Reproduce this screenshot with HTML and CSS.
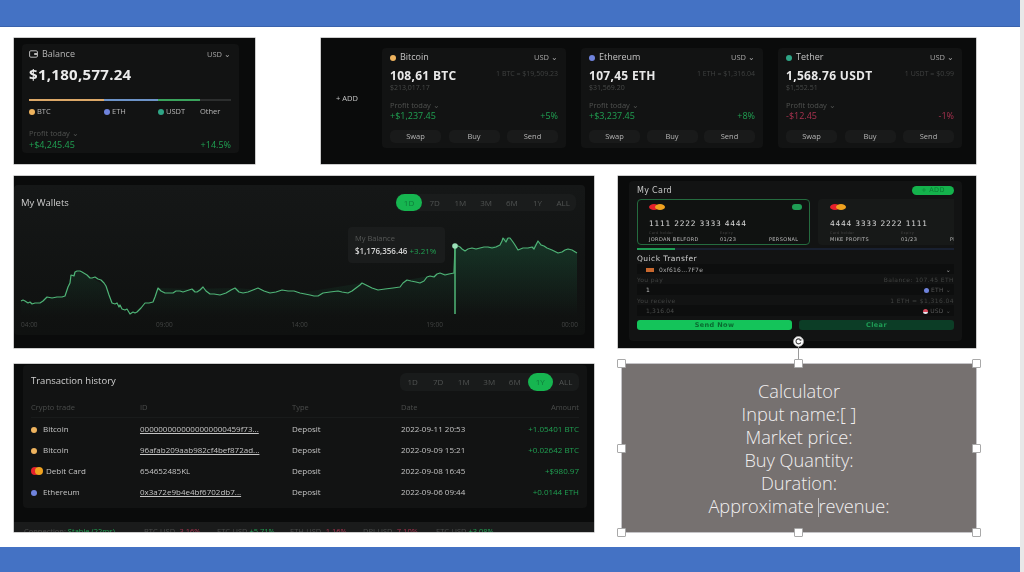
FILE: index.html
```html
<!DOCTYPE html>
<html lang="en">
<head>
  <meta charset="UTF-8" />
  <title>Crypto dashboard slide</title>
  <link rel="stylesheet" href="styles.css">
</head>
<body>
<div class="slide">
  <div class="band band-top"></div>
  <div class="band band-bottom"></div>

  <!-- Balance -->
  <section class="shot shot-balance">
    <div class="inner balance">
      <div class="row-between head">
        <span class="title-icon">
          <svg width="9" height="8" viewBox="0 0 9 8"><rect x="0.6" y="0.8" width="7.8" height="6.4" rx="1.2" fill="none" stroke="#bbb" stroke-width="1"/><rect x="5.2" y="3" width="3.2" height="2" fill="#bbb"/></svg>
          Balance
        </span>
        <span class="muted-usd">USD ⌄</span>
      </div>
      <div class="balance-value">$1,180,577.24</div>
      <div class="split-bar">
        <i class="seg-btc"></i><i class="seg-eth"></i><i class="seg-usdt"></i><i class="seg-other"></i>
      </div>
      <div class="legend">
        <span class="leg-btc"><i class="dot dot-btc"></i>BTC</span>
        <span class="leg-eth"><i class="dot dot-eth"></i>ETH</span>
        <span class="leg-usdt"><i class="dot dot-usdt"></i>USDT</span>
        <span>Other</span>
      </div>
      <div class="profit-label balance-profit">Profit today ⌄</div>
      <div class="row-between profit-value up"><span>+$4,245.45</span><span>+14.5%</span></div>
    </div>
  </section>

  <!-- Coin cards -->
  <section class="shot shot-assets">
    <div class="add-link">+ ADD</div>
    <div class="asset-list">
      <div class="inner asset asset-wide">
        <div class="row-between head"><span class="coin"><i class="dot dot-btc"></i>Bitcoin</span><span class="muted-usd">USD ⌄</span></div>
        <div class="row-between asset-main"><strong>108,61 BTC</strong><span class="rate">1 BTC = $19,509.23</span></div>
        <div class="asset-sub">$213,017.17</div>
        <div class="profit-label">Profit today ⌄</div>
        <div class="row-between profit-value up"><span>+$1,237.45</span><span>+5%</span></div>
        <div class="actions"><span>Swap</span><span>Buy</span><span>Send</span></div>
      </div>
      <div class="inner asset">
        <div class="row-between head"><span class="coin"><i class="dot dot-eth"></i>Ethereum</span><span class="muted-usd">USD ⌄</span></div>
        <div class="row-between asset-main"><strong>107,45 ETH</strong><span class="rate">1 ETH = $1,316.04</span></div>
        <div class="asset-sub">$31,569.20</div>
        <div class="profit-label">Profit today ⌄</div>
        <div class="row-between profit-value up"><span>+$3,237.45</span><span>+8%</span></div>
        <div class="actions"><span>Swap</span><span>Buy</span><span>Send</span></div>
      </div>
      <div class="inner asset asset-wide">
        <div class="row-between head"><span class="coin"><i class="dot dot-usdt"></i>Tether</span><span class="muted-usd">USD ⌄</span></div>
        <div class="row-between asset-main"><strong>1,568.76 USDT</strong><span class="rate">1 USDT = $0.99</span></div>
        <div class="asset-sub">$1,552.51</div>
        <div class="profit-label">Profit today ⌄</div>
        <div class="row-between profit-value down"><span>-$12.45</span><span>-1%</span></div>
        <div class="actions"><span>Swap</span><span>Buy</span><span>Send</span></div>
      </div>
    </div>
  </section>

  <!-- Wallet chart -->
  <section class="shot shot-wallets">
    <div class="inner wallets">
      <div class="row-between wallets-head">
        <span class="wallets-title">My Wallets</span>
        <div class="tabs">
          <span class="on">1D</span><span>7D</span><span>1M</span><span>3M</span><span>6M</span><span>1Y</span><span>ALL</span>
        </div>
      </div>
      <svg class="chart" width="580" height="92" viewBox="14 224 580 92">
        <defs>
          <linearGradient id="fillRight" x1="0" y1="0" x2="0" y2="1">
            <stop offset="0" stop-color="#1c6b45" stop-opacity="0.38"/>
            <stop offset="1" stop-color="#1c6b45" stop-opacity="0"/>
          </linearGradient>
          <linearGradient id="fillLeft" x1="0" y1="0" x2="0" y2="1">
            <stop offset="0" stop-color="#1c6b45" stop-opacity="0.2"/>
            <stop offset="1" stop-color="#1c6b45" stop-opacity="0"/>
          </linearGradient>
        </defs>
        <polygon fill="url(#fillLeft)" points="21,301 35,303 47,297 65,296 71,275 77,271 92,278 106,286 112,303 130,314 145,303 153,302 158,288 192,289 235,288 300,293 362,283 378,290 400,287 407,280 430,276 440,273 454,273 454,316 21,316"/>
        <polygon fill="url(#fillRight)" points="455,246 465,251 480,248 500,245 503,238 510,238 518,250 532,247 538,241 547,248 558,253 568,249 577,253 577,316 455,316"/>
        <polyline fill="none" stroke="#4fb477" stroke-width="1.2" stroke-linejoin="round" points="21,301 23,300 25,301 28,303 30,302 32,304 35,303 38,303 40,303 43,301 47,297 52,298 57,297 62,297 65,296 68,287 70,283 71,275 74,276 75,272 77,271 80,271 82,272 87,275 90,278 92,278 95,277 98,279 101,280 104,283 106,286 109,295 112,303 115,304 117,303 119,307 120,305 122,309 125,310 127,309 130,314 133,312 135,313 137,312 141,308 145,303 149,303 153,302 155,297 158,288 161,291 165,293 169,293 173,293 176,291 180,291 183,292 186,291 189,290 192,289 195,292 197,292 200,290 203,287 206,291 210,294 214,294 220,295 226,293 231,290 235,288 239,292 243,293 248,292 253,290 258,288 264,291 270,293 276,292 282,290 288,291 294,291 297,292 300,293 305,294 310,295 314,296 318,296 323,293 330,292 338,291 342,292 348,293 352,291 356,288 360,285 362,283 366,285 372,288 378,290 385,289 393,288 400,287 403,283 407,280 411,281 416,282 420,283 424,281 427,277 430,276 434,277 437,274 440,273 445,275 449,274 454,273 455,246 458,246 460,247 462,249 465,251 468,249 472,248 476,249 480,248 484,247 488,247 492,248 496,247 500,245 502,241 503,238 506,242 508,238 510,238 513,242 515,245 518,250 523,248 528,248 532,247 534,249 536,245 538,241 541,245 544,246 547,248 552,250 558,253 562,252 565,250 568,249 572,250 577,253"/>
        <line x1="455" y1="246" x2="455" y2="314" stroke="#4cae72" stroke-width="1.6"/>
        <circle cx="455" cy="246" r="2.8" fill="#9be0b8"/>
      </svg>
      <div class="axis"><span>04:00</span><span>09:00</span><span>14:00</span><span>19:00</span><span>00:00</span></div>
    </div>
    <div class="chart-tip">
      <div class="tip-label">My Balance</div>
      <div class="tip-value">$1,176,356.46 <span class="up">+3.21%</span></div>
    </div>
  </section>

  <!-- Cards + quick transfer -->
  <section class="shot shot-cards">
    <div class="inner cards">
      <div class="row-between cards-head"><span>My Card</span><span class="add-pill">+ ADD</span></div>
      <div class="card-row">
        <div class="bank-card bank-card-on">
          <div class="row-between"><span class="mc"><i></i><i></i></span><span class="card-badge"></span></div>
          <div class="card-number">1111 2222 3333 4444</div>
          <div class="card-meta">
            <div class="meta-name"><small>Card holder</small>JORDAN BELFORD</div>
            <div class="meta-exp"><small>Expiry</small>01/23</div>
            <div class="meta-kind">PERSONAL</div>
          </div>
        </div>
        <div class="bank-card">
          <div class="row-between"><span class="mc"><i></i><i></i></span></div>
          <div class="card-number">4444 3333 2222 1111</div>
          <div class="card-meta">
            <div class="meta-name"><small>Card holder</small>MIKE PROFITS</div>
            <div class="meta-exp"><small>Expiry</small>01/23</div>
            <div class="meta-kind">PERSONAL</div>
          </div>
        </div>
      </div>
      <div class="card-progress"><i></i></div>
      <div class="quick-title">Quick Transfer</div>
      <div class="field field-address"><span><i class="addr-icon"></i>0xf616...7F7e</span><span>⌄</span></div>
      <div class="row-between field-label"><span>You pay</span><span>Balance: 107.45 ETH</span></div>
      <div class="field field-tall"><span class="field-num">1</span><span><i class="dot dot-eth"></i>ETH ⌄</span></div>
      <div class="row-between field-label"><span>You receive</span><span>1 ETH = $1,316.04</span></div>
      <div class="field field-tall"><span class="field-dim">1,316.04</span><span><i class="dot dot-flag"></i>USD ⌄</span></div>
      <div class="form-buttons"><span class="btn-send">Send Now</span><span class="btn-clear">Clear</span></div>
    </div>
  </section>

  <!-- Transactions -->
  <section class="shot shot-history">
    <div class="inner history">
      <div class="row-between history-head">
        <span class="history-title">Transaction history</span>
        <div class="tabs">
          <span>1D</span><span>7D</span><span>1M</span><span>3M</span><span>6M</span><span class="on">1Y</span><span>ALL</span>
        </div>
      </div>
      <table class="tx">
        <thead>
          <tr><th>Crypto trade</th><th>ID</th><th>Type</th><th>Date</th><th>Amount</th></tr>
        </thead>
        <tbody>
          <tr><td><i class="dot dot-btc"></i>Bitcoin</td><td><u>0000000000000000000459f73...</u></td><td>Deposit</td><td>2022-09-11 20:53</td><td class="up">+1.05401 BTC</td></tr>
          <tr><td><i class="dot dot-btc"></i>Bitcoin</td><td><u>96afab209aab982cf4bef872ad...</u></td><td>Deposit</td><td>2022-09-09 15:21</td><td class="up">+0.02642 BTC</td></tr>
          <tr><td><span class="mc mc-small"><i></i><i></i></span>Debit Card</td><td>654652485KL</td><td>Deposit</td><td>2022-09-08 16:45</td><td class="up">+$980.97</td></tr>
          <tr><td><i class="dot dot-eth"></i>Ethereum</td><td><u>0x3a72e9b4e4bf6702db7...</u></td><td>Deposit</td><td>2022-09-06 09:44</td><td class="up">+0.0144 ETH</td></tr>
        </tbody>
      </table>
    </div>
    <div class="ticker">
      <span class="tick-conn">Connection: <b class="up">Stable (22ms)</b></span>
      <span class="tick">BTC-USD <b class="down">-3.16%</b></span>
      <span class="tick">ETC-USD <b class="up">+5.71%</b></span>
      <span class="tick">ETH-USD <b class="down">-1.16%</b></span>
      <span class="tick">DPI-USD <b class="down">-7.10%</b></span>
      <span class="tick">ETC-USD <b class="up">+3.08%</b></span>
    </div>
  </section>

  <!-- Selected text box on the slide -->
  <div class="textbox">
    <p>Calculator</p>
    <p>Input name:[ ]</p>
    <p>Market price:</p>
    <p>Buy Quantity:</p>
    <p>Duration:</p>
    <p>Approximate <span class="caret"></span>revenue:</p>
    <i class="handle h-tl"></i><i class="handle h-tc"></i><i class="handle h-tr"></i>
    <i class="handle h-ml"></i><i class="handle h-mr"></i>
    <i class="handle h-bl"></i><i class="handle h-bc"></i><i class="handle h-br"></i>
    <i class="rotate-stem"></i>
    <span class="rotate-knob">
      <svg width="11" height="11" viewBox="0 0 11 11"><circle cx="5.5" cy="5.5" r="5" fill="#fff" stroke="#aaa" stroke-width="0.8"/><path d="M7.8 6.4A2.5 2.5 0 1 1 7.4 3.7" fill="none" stroke="#444" stroke-width="1.1"/><path d="M8.4 2.4V4.7H6.2z" fill="#444"/></svg>
    </span>
  </div>
</div>
</body>
</html>
```

FILE: styles.css
```css
html, body {
  margin: 0;
  padding: 0;
  background: #e8e8e8;
}

.slide {
  position: relative;
  width: 1020px;
  height: 572px;
  overflow: hidden;
  background: #fff;
  font-family: "Open Sans", Arial, sans-serif;
}

.band {
  position: absolute;
  left: 0;
  right: 0;
  background: #4472c4;
}
.band-top { top: 0; height: 26px; border-bottom: 1px solid #3a63ad; }
.band-bottom { top: 547px; height: 25px; }

/* pasted screenshots, placed freely on the slide */
.shot {
  position: absolute;
  background: #0a0b0b;
  color: #cfcfcf;
  overflow: hidden;
  font-size: 8px;
  box-shadow: 0 0 0 0.5px #999;
}
.shot > * { filter: blur(0.45px); }
.shot-balance { left: 14px; top: 38px; width: 241px; height: 126px; }
.shot-assets { left: 321px; top: 38px; width: 655px; height: 126px; display: flex; }
.shot-wallets { left: 14px; top: 176px; width: 580px; height: 172px; }
.shot-cards { left: 618px; top: 176px; width: 358px; height: 172px; }
.shot-history { left: 14px; top: 364px; width: 580px; height: 168px; }

.inner {
  background: #121313;
  border-radius: 4px;
  box-sizing: border-box;
}

.row-between {
  display: flex;
  justify-content: space-between;
  align-items: center;
}

.up { color: #20a052; }
.down { color: #a8324f; }

.dot {
  display: inline-block;
  width: 6px;
  height: 6px;
  border-radius: 50%;
  margin-right: 4px;
  vertical-align: -0.5px;
}
.dot-btc { background: #eeb35e; }
.dot-eth { background: #6f83dc; }
.dot-usdt { background: #2fa586; }
.dot-flag { background: linear-gradient(#d9485a 50%, #e8e8f0 50%); }

.head { height: 10px; line-height: 10px; font-size: 9px; }
.muted-usd { font-size: 7.5px; color: #a5a5a5; }
.profit-label { height: 8px; line-height: 8px; font-size: 7.5px; color: #505250; }
.profit-value { height: 10px; line-height: 10px; font-size: 9px; }

/* balance */
.balance {
  margin: 6px 0 0 8px;
  width: 217px;
  height: 109px;
  padding: 5px 8px 0 7px;
}
.title-icon { display: flex; align-items: center; gap: 4px; color: #b5b5b5; }
.balance-value {
  margin-top: 6px;
  height: 18px;
  line-height: 18px;
  font-size: 15px;
  font-weight: 700;
  letter-spacing: 0.3px;
  color: #ececec;
}
.split-bar { display: flex; height: 2px; margin-top: 16px; }
.split-bar i { display: block; height: 2px; }
.seg-btc { width: 75px; background: #dca868; }
.seg-eth { width: 54px; background: #6d93c8; }
.seg-usdt { width: 42px; background: #3aa35c; }
.seg-other { flex: 1; background: #2c2e2e; }
.legend { display: flex; height: 8px; line-height: 8px; margin-top: 6px; font-size: 7.5px; color: #b8b8b8; }
.leg-btc { width: 75px; }
.leg-eth { width: 54px; }
.leg-usdt { width: 42px; }
.legend .dot { margin-right: 2px; }
.balance-profit { margin-top: 14px; }
.balance .profit-value { margin-top: 3px; }

/* coin cards */
.add-link {
  width: 61px;
  padding-left: 15px;
  box-sizing: border-box;
  line-height: 120px;
  color: #c5c5c5;
  font-size: 7.5px;
}
.asset-list { display: flex; gap: 15px; padding-top: 10px; }
.asset {
  width: 182px;
  height: 100px;
  padding: 4px 8px 0;
}
.asset-wide { width: 184px; }
.coin { color: #c3c3c3; }
.asset-main { height: 14px; line-height: 14px; margin-top: 7px; }
.asset-main strong { font-size: 12px; color: #e9e9e9; letter-spacing: 0.3px; }
.rate { font-size: 7px; line-height: 10px; color: #3f4140; align-self: flex-start; }
.asset-sub { height: 8px; line-height: 8px; margin-top: 1px; font-size: 7px; color: #484a49; }
.asset .profit-label { margin-top: 9px; }
.asset .profit-value { margin-top: 2px; }
.actions { display: flex; justify-content: space-between; margin-top: 9px; }
.actions span {
  width: 51px;
  height: 13px;
  line-height: 13px;
  text-align: center;
  border-radius: 5px;
  background: #191a1a;
  color: #b5b5b5;
  font-size: 7.5px;
}

/* wallets */
.wallets {
  width: 571px;
  height: 150px;
  margin-top: 9px;
  background: linear-gradient(#151717, #0f1110);
}
.wallets-head { height: 34px; margin-bottom: 5px; padding: 0 7px; }
.wallets-title { font-size: 9.5px; color: #cdcdcd; }
.tabs {
  display: flex;
  height: 17px;
  border-radius: 6px;
  background: #1a1c1c;
}
.wallets-head .tabs { margin-right: 2px; }
.tabs span {
  width: 25.7px;
  line-height: 17px;
  text-align: center;
  font-size: 8px;
  color: #505352;
}
.tabs .on {
  border-radius: 9px;
  background: #16b550;
  color: #0f7a3a;
}
.chart { display: block; }
.axis {
  display: flex;
  justify-content: space-between;
  padding: 4px 7px 0;
  font-size: 6.5px;
  color: #424443;
}
.chart-tip {
  position: absolute;
  left: 334px;
  top: 51px;
  width: 97px;
  height: 36px;
  box-sizing: border-box;
  padding: 6px 7px;
  border-radius: 4px;
  background: #1a1c1c;
}
.tip-label { font-size: 7.5px; line-height: 10px; color: #565857; }
.tip-value { font-size: 8px; line-height: 11px; margin-top: 2px; font-weight: 600; color: #d5d5d5; white-space: nowrap; }
.tip-value .up { font-weight: 400; }

/* my card + transfer */
.cards {
  width: 333px;
  height: 160px;
  margin: 5px 0 0 11px;
  padding: 5px 8px 0;
  overflow: hidden;
  font-family: "DejaVu Sans", Arial, sans-serif;
  font-size: 6px;
}
.cards-head { height: 9px; font-size: 8px; letter-spacing: 0.3px; color: #c8c8c8; }
.add-pill {
  width: 42px;
  height: 9px;
  line-height: 9px;
  text-align: center;
  border-radius: 5px;
  background: #14b24c;
  color: #0c7d35;
  font-size: 6.5px;
}
.card-row { display: flex; gap: 8px; margin-top: 4px; overflow: hidden; }
.bank-card {
  flex: 0 0 173px;
  height: 46px;
  box-sizing: border-box;
  padding: 4px 7px 0 11px;
  border: 1px solid transparent;
  border-radius: 4px;
  background: #171918;
}
.bank-card-on { border-color: #256b3f; background: #101211; }
.mc { display: inline-flex; }
.mc i { width: 10px; height: 6px; border-radius: 50%; background: #e6212c; }
.mc i + i { margin-left: -4px; background: #f0a21f; }
.mc-small { margin-right: 3px; vertical-align: -1px; }
.mc-small i { width: 8px; height: 8px; }
.mc-small i + i { margin-left: -4px; }
.card-badge { width: 10px; height: 6px; border-radius: 3px; background: #1f9d55; }
.card-number {
  margin-top: 9px;
  height: 9px;
  line-height: 9px;
  font-size: 7.5px;
  letter-spacing: 0.75px;
  color: #d8d8d8;
  white-space: nowrap;
}
.card-meta { display: flex; margin-top: 3px; font-size: 5px; line-height: 7px; letter-spacing: 0.35px; color: #bbb; white-space: nowrap; }
.card-meta small { display: block; font-size: 3.5px; color: #444; line-height: 5px; }
.meta-name { width: 71px; }
.meta-exp { width: 49px; }
.meta-kind { align-self: flex-end; }
.card-progress { height: 2px; margin-top: 3px; background: #192030; }
.card-progress i { display: block; width: 38px; height: 2px; background: #1f9d55; }
.quick-title { height: 10px; line-height: 10px; margin-top: 4px; font-size: 7.5px; letter-spacing: 0.45px; color: #cfcfcf; }
.field {
  display: flex;
  justify-content: space-between;
  align-items: center;
  height: 10px;
  padding: 0 3px 0 9px;
  background: #0d0e0e;
  color: #a9a9a9;
  font-size: 6px;
  letter-spacing: 0.2px;
}
.field-tall { height: 11px; color: #555; }
.field-tall .dot { width: 5px; height: 5px; margin-right: 2px; }
.field-num { color: #bbb; }
.field-dim { color: #4a4c4b; }
.addr-icon { display: inline-block; width: 8px; height: 4px; margin-right: 5px; background: #c9682e; }
.field-label { height: 10px; color: #404241; font-size: 6px; letter-spacing: 0.4px; }
.form-buttons { display: flex; gap: 7px; margin-top: 4px; }
.form-buttons span {
  flex: 1;
  height: 10px;
  line-height: 10px;
  text-align: center;
  border-radius: 3px;
  font-size: 6.5px;
  font-weight: 700;
  letter-spacing: 0.4px;
}
.btn-send { background: #14c45a; color: #0a6a30; }
.btn-clear { background: #0c3d26; color: #1f9d55; }

/* transactions */
.history {
  width: 564px;
  height: 143px;
  margin: 1px 0 0 9px;
  padding: 0 6px 0 8px;
}
.history-head { height: 26px; align-items: flex-end; }
.history-title { font-size: 9.5px; line-height: 20px; color: #d0d0d0; }
.history .tabs { height: 18px; margin-right: 2.5px; background: #191b1b; }
.history .tabs span { width: 25.5px; line-height: 18px; }
.tx {
  width: 548px;
  margin-top: 6px;
  border-collapse: collapse;
  table-layout: fixed;
  font-size: 8px;
}
.tx th {
  height: 20px;
  padding: 0;
  font-weight: 400;
  font-size: 7.5px;
  text-align: left;
  color: #4a4c4b;
  border-bottom: 1px solid #191b1b;
}
.tx td { height: 21px; padding: 0; color: #c4c4c4; white-space: nowrap; }
.tx th:nth-child(1) { width: 109px; }
.tx th:nth-child(2) { width: 152px; }
.tx th:nth-child(3) { width: 109px; }
.tx th:nth-child(4) { width: 100px; }
.tx th:last-child, .tx td:last-child { text-align: right; }
.tx td.up { color: #20a052; }
.tx .dot { margin-right: 6px; }

.ticker {
  display: flex;
  height: 10px;
  margin-top: 14px;
  padding-left: 10px;
  background: #1a1b1b;
  font-size: 7.5px;
  line-height: 18px;
  color: #4a4c4b;
  white-space: nowrap;
}
.ticker b { font-weight: 400; }
.tick-conn { width: 120px; }
.tick { width: 73px; }

/* selected shape */
.textbox {
  position: absolute;
  left: 622px;
  top: 364px;
  width: 354px;
  height: 168px;
  box-sizing: border-box;
  padding-top: 16px;
  background: #767170;
  box-shadow: 0 0 0 0.5px #8b8a90;
  color: #f2f0f0;
  font-family: "Open Sans", Arial, sans-serif;
  font-weight: 300;
  font-size: 18.2px;
  line-height: 23px;
  text-align: center;
}
.textbox p { margin: 0; }
.caret { display: inline-block; width: 1px; height: 19px; margin-right: -1px; background: #c8c6c6; vertical-align: -4px; }
.handle {
  position: absolute;
  width: 7px;
  height: 7px;
  background: #fff;
  border: 1px solid #a9a9a9;
  border-radius: 1px;
}
.h-tl { left: -5px; top: -5px; }
.h-tc { left: 172px; top: -5px; }
.h-tr { right: -5px; top: -5px; }
.h-ml { left: -5px; top: 80px; }
.h-mr { right: -5px; top: 80px; }
.h-bl { left: -5px; bottom: -5px; }
.h-bc { left: 172px; bottom: -5px; }
.h-br { right: -5px; bottom: -5px; }
.rotate-stem { position: absolute; left: 176px; top: -21px; width: 1px; height: 16px; background: #9a9a9a; }
.rotate-knob { position: absolute; left: 171px; top: -28px; width: 11px; height: 11px; line-height: 0; }
```
